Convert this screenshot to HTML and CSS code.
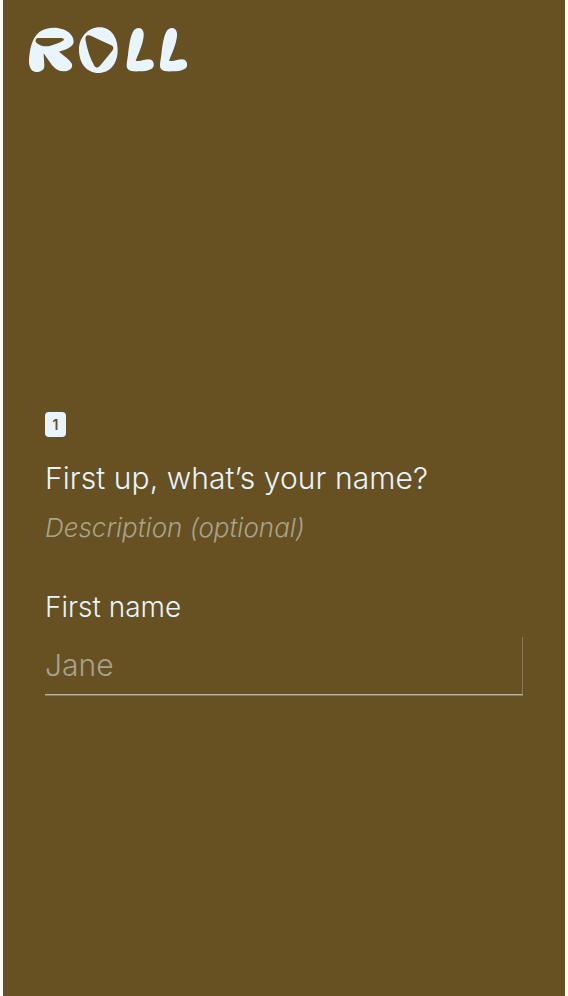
FILE: index.html
```html
<!DOCTYPE html>
<html lang="en">
<head>
    <meta charset="UTF-8">
    <meta name="viewport" content="width=device-width, initial-scale=1.0">
    <title>Roll</title>
    <link rel="stylesheet" href="styles.css">
</head>
<body>
    <div class="panel">
        <header class="brand">
            <svg class="logo" viewBox="85 78 480 141" width="160" height="47" role="img" aria-label="Roll">
                <path fill-rule="evenodd" d="M88 180 C90 150 95 115 120 95 C140 82 170 80 190 88 C210 95 222 110 222 125 C222 140 200 148 178 155 C190 165 210 178 217 192 C220 205 208 215 190 214 C175 214 165 205 155 193 L132 160 C132 172 134 185 134 198 C134 210 122 216 110 216 C95 216 87 200 88 180 Z M114 114 C107 116 106 124 110 128 C120 137 135 141 150 138 C165 134 182 128 192 121 C195 117 190 114 183 114 Z"/>
                <path fill-rule="evenodd" d="M300 82 C334 82 354 112 354 150 C354 192 330 219 296 219 C262 219 238 190 238 150 C238 112 265 82 300 82 Z M264 106 C258 107 256 113 258 122 C263 150 272 176 284 197 C288 204 295 204 301 197 L338 152 C343 146 342 139 335 136 C315 127 295 118 277 109 C272 106 268 105 264 106 Z"/>
                <path d="M400 95 C408 80 430 80 432 100 C434 120 420 155 408 182 C420 186 435 178 447 178 C458 178 464 188 462 197 C460 208 445 213 420 214 C405 215 390 214 385 208 C378 200 382 185 385 165 C388 135 392 110 400 95 Z"/>
                <path d="M500 95 C508 80 530 80 532 100 C534 120 520 155 508 182 C520 186 535 178 547 178 C558 178 564 188 562 197 C560 208 545 213 520 214 C505 215 490 214 485 208 C478 200 482 185 485 165 C488 135 492 110 500 95 Z"/>
            </svg>
        </header>
        <main class="question">
            <span class="step">1</span>
            <h1 class="title">First up, what’s your name?</h1>
            <p class="description">Description (optional)</p>
            <label class="field-label" for="firstName">First name</label>
            <input class="text-input" id="firstName" type="text" placeholder="Jane">
        </main>
    </div>
</body>
</html>
```

FILE: styles.css
```css
:root {
    --bg-color: #675021;
    --text-color: #e8f4fe;
    --muted-color: #a9a28c;
}

html, body {
    height: 100%;
}
body {
    margin: 0;
    padding: 0 3px;
    box-sizing: border-box;
    background-color: #fff;
    font-family: Inter, 'Noto Sans', sans-serif;
    font-weight: 300;
}
.panel {
    height: 100%;
    background-color: var(--bg-color);
    color: var(--text-color);
    overflow: hidden;
}
.brand {
    padding: 26px 0 0 25px;
    height: 412px;
    box-sizing: border-box;
}
.logo {
    display: block;
    fill: var(--text-color);
}
.question {
    padding: 0 42px;
}
.step {
    display: flex;
    align-items: center;
    justify-content: center;
    width: 21px;
    height: 25px;
    border-radius: 4px;
    background-color: var(--text-color);
    color: var(--bg-color);
    font-size: 14px;
    font-weight: 600;
}
.title {
    margin: 20px 0 0 0;
    font-size: 30px;
    line-height: 42px;
    font-weight: 300;
    letter-spacing: 0.08px;
}
.description {
    margin: 11px 0 0 0;
    font-size: 26px;
    line-height: 36px;
    font-style: italic;
    color: var(--muted-color);
}
.field-label {
    display: block;
    margin-top: 41px;
    font-size: 28px;
    line-height: 40px;
}
.text-input {
    display: block;
    width: 100%;
    height: 58px;
    margin-top: 10px;
    padding: 0 0 2px 0;
    box-sizing: border-box;
    background: transparent;
    border: none;
    border-right: 1px solid #8a7a58;
    border-bottom: 1px solid #b9b3a0;
    box-shadow: 0 1px 0 #8a7a58;
    border-radius: 0;
    color: var(--text-color);
    font: inherit;
    font-size: 30px;
    outline: none;
}
.text-input::placeholder {
    color: var(--muted-color);
    opacity: 1;
}
```
